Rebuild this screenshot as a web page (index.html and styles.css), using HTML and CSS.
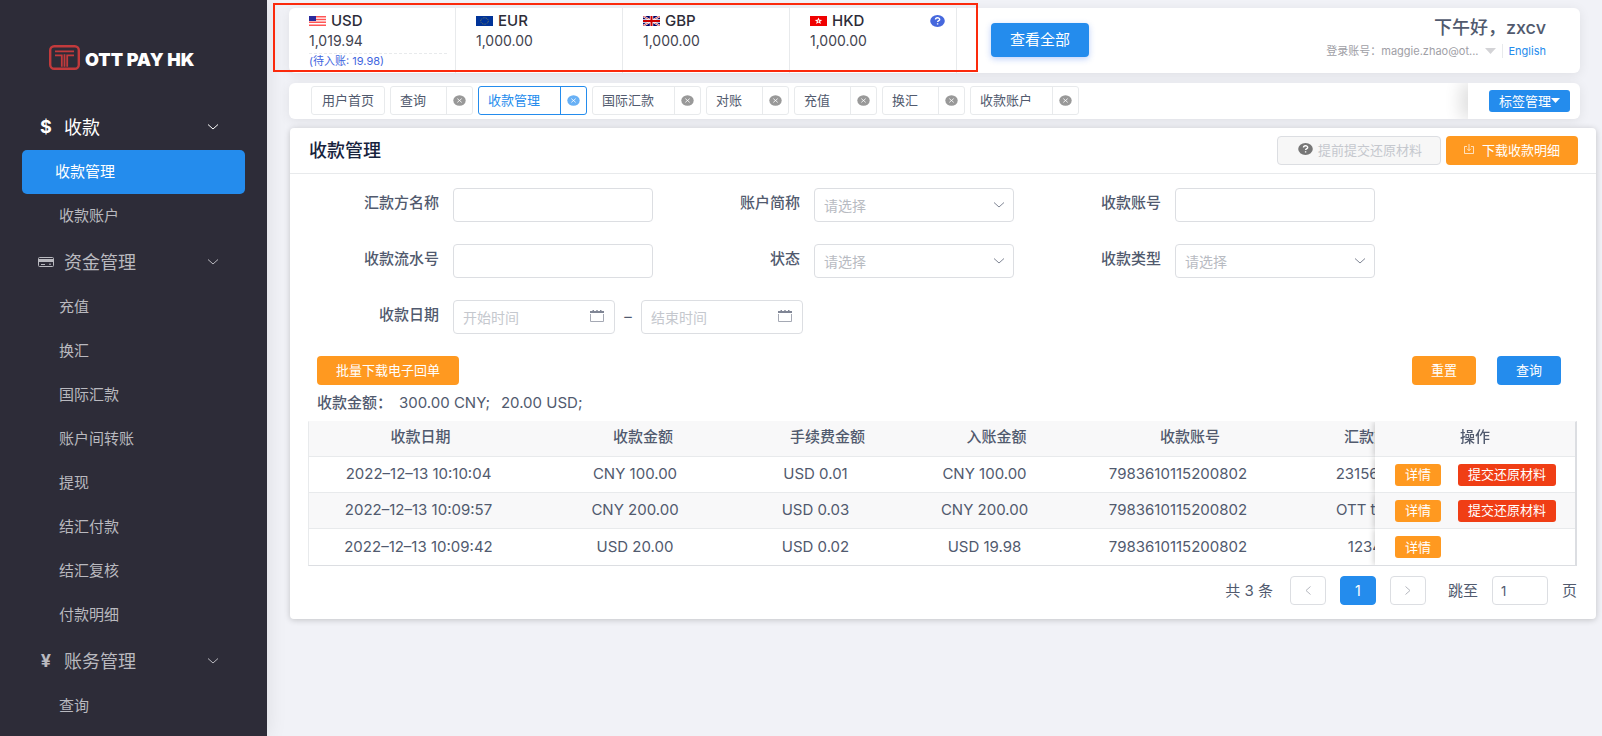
FILE: index.html
```html
<!DOCTYPE html>
<html lang="zh-CN">
<head>
    <meta charset="utf-8">
    <title>收款管理</title>
    <link rel="stylesheet" href="styles.css">
</head>
<body>
    <!-- shared icons -->
    <svg class="sprite" aria-hidden="true">
        <symbol id="chevron" viewBox="0 0 12 8"><path d="M1 1.5l5 4.5 5-4.5" fill="none" stroke="currentColor"/></symbol>
        <symbol id="close" viewBox="0 0 13 11"><ellipse cx="6.5" cy="5.5" rx="6.2" ry="5.3" fill="currentColor"/><path d="M4.3 3.6l4.400 3.800M8.700 3.600L4.300 7.400" stroke="#fff" stroke-width=".8"/></symbol>
        <symbol id="calendar" viewBox="0 0 14 12"><path d="M.5 4v7.500h13V4" fill="none" stroke="#a5a9b4"/><path d="M0 1h2.500V0h1.500v1h2.300V0h1.400v1H10V0h1.500v1H14v2H0z" fill="#808695"/></symbol>
        <symbol id="help" viewBox="0 0 15 12"><ellipse cx="7.500" cy="6" rx="7.300" ry="5.900" fill="currentColor"/><path d="M5.500 4.600c0-2.400 4.200-2.300 4.200-.2 0 1.300-2.100 1.200-2.100 2.700M7.600 8.200v1.300" fill="none" stroke="#fff" stroke-width="1.400"/></symbol>
    </svg>

    <div class="layout">
        <aside class="sidebar">
            <div class="logo">
                <svg width="31" height="25" viewBox="0 0 31 25">
                    <rect x="1.200" y="1.200" width="28.600" height="22.600" rx="4" fill="none" stroke="#c23a3c" stroke-width="2.400"/>
                    <path d="M6 6.300h19M6 10.300h6.800v11.500M25 10.300h-6.800v11.500M15.500 9.300v12.500" fill="none" stroke="#c23a3c" stroke-width="1.800"/>
                </svg>
                <span>OTT PAY HK</span>
            </div>
            <nav>
                <button class="menu-group open">
                    <span class="menu-icon">$</span>
                    <span class="menu-name">收款</span>
                    <svg width="12" height="8"><use href="#chevron"/></svg>
                </button>
                <a class="menu-item active" href="#">收款管理</a>
                <a class="menu-item" href="#">收款账户</a>
                <button class="menu-group">
                    <span class="menu-icon">
                        <svg width="16" height="10" viewBox="0 0 16 10"><rect x=".5" y=".5" width="15" height="9" rx="1" fill="none" stroke="currentColor"/><path d="M1 2h14v3H1z" fill="currentColor"/><path d="M3 7.500h4M11 7.200h2" stroke="currentColor"/></svg>
                    </span>
                    <span class="menu-name">资金管理</span>
                    <svg width="12" height="8"><use href="#chevron"/></svg>
                </button>
                <a class="menu-item" href="#">充值</a>
                <a class="menu-item" href="#">换汇</a>
                <a class="menu-item" href="#">国际汇款</a>
                <a class="menu-item" href="#">账户间转账</a>
                <a class="menu-item" href="#">提现</a>
                <a class="menu-item" href="#">结汇付款</a>
                <a class="menu-item" href="#">结汇复核</a>
                <a class="menu-item" href="#">付款明细</a>
                <button class="menu-group">
                    <span class="menu-icon">¥</span>
                    <span class="menu-name">账务管理</span>
                    <svg width="12" height="8"><use href="#chevron"/></svg>
                </button>
                <a class="menu-item" href="#">查询</a>
            </nav>
        </aside>

        <main class="content">
            <div class="highlight"></div>
            <header class="topbar">
                <div class="currency">
                    <div class="currency-name">
                        <svg width="17" height="10" viewBox="0 0 17 10"><path fill="#fff" d="M0 0h17v10H0z"/><path d="M0 .7h17M0 3.500h17M0 6.300h17M0 9.200h17" stroke="#f55" stroke-width="1.500"/><path fill="#2a2a9c" d="M0 0h7v5H0z"/></svg>
                        USD
                    </div>
                    <div class="amount">1,019.94</div>
                    <div class="pending">(待入账: 19.98)</div>
                </div>
                <div class="currency">
                    <div class="currency-name">
                        <svg width="17" height="10" viewBox="0 0 17 10"><path fill="#039" d="M0 0h17v10H0z"/><ellipse cx="8.500" cy="5" rx="3.800" ry="3.200" fill="none" stroke="#aa9f40" stroke-width=".8" stroke-dasharray=".8 1"/></svg>
                        EUR
                    </div>
                    <div class="amount">1,000.00</div>
                </div>
                <div class="currency">
                    <div class="currency-name">
                        <svg width="17" height="10" viewBox="0 0 17 10"><path fill="#006" d="M0 0h17v10H0z"/><path d="M0 0l17 10M17 0L0 10" stroke="#fff" stroke-width="2"/><path d="M0 0l17 10M17 0L0 10" stroke="#c00" stroke-width=".7"/><path d="M8.500 0v10M0 5h17" stroke="#fff" stroke-width="3.400"/><path d="M8.500 0v10M0 5h17" stroke="#c00" stroke-width="2"/></svg>
                        GBP
                    </div>
                    <div class="amount">1,000.00</div>
                </div>
                <div class="currency">
                    <div class="currency-name">
                        <svg width="17" height="10" viewBox="0 0 17 10"><path fill="#f00000" d="M0 0h17v10H0z"/><path d="M8.500 1.500l1 2.300 2.700.2-2 1.500.7 2.500-2.400-1.400L6.100 8l.7-2.500-2-1.500 2.700-.2z" fill="#fff"/><circle cx="8.500" cy="5" r=".8" fill="#f00000"/></svg>
                        HKD
                        <svg class="currency-help" width="15" height="12"><use href="#help"/></svg>
                    </div>
                    <div class="amount">1,000.00</div>
                </div>
                <button class="view-all">查看全部</button>
                <div class="user">
                    <div class="greeting">下午好，zxcv</div>
                    <div class="account">
                        <span>登录账号：maggie.zhao@ot...</span>
                        <svg width="11" height="6" viewBox="0 0 11 6"><path d="M0 0h11L5.500 6z" fill="#d3d3d6"/></svg>
                        <a href="#">English</a>
                    </div>
                </div>
            </header>

            <div class="tabbar">
                <div class="tabs">
                    <div class="tab"><a href="#">用户首页</a></div>
                    <div class="tab closable"><a href="#">查询</a><button aria-label="关闭"><svg width="13" height="11"><use href="#close"/></svg></button></div>
                    <div class="tab closable current"><a href="#">收款管理</a><button aria-label="关闭"><svg width="13" height="11"><use href="#close"/></svg></button></div>
                    <div class="tab closable"><a href="#">国际汇款</a><button aria-label="关闭"><svg width="13" height="11"><use href="#close"/></svg></button></div>
                    <div class="tab closable"><a href="#">对账</a><button aria-label="关闭"><svg width="13" height="11"><use href="#close"/></svg></button></div>
                    <div class="tab closable"><a href="#">充值</a><button aria-label="关闭"><svg width="13" height="11"><use href="#close"/></svg></button></div>
                    <div class="tab closable"><a href="#">换汇</a><button aria-label="关闭"><svg width="13" height="11"><use href="#close"/></svg></button></div>
                    <div class="tab closable"><a href="#">收款账户</a><button aria-label="关闭"><svg width="13" height="11"><use href="#close"/></svg></button></div>
                </div>
                <div class="tab-manage">
                    <button class="btn-small blue">标签管理<svg width="9" height="5" viewBox="0 0 9 5"><path d="M0 0h9L4.500 5z" fill="#fff"/></svg></button>
                </div>
            </div>

            <section class="card">
                <div class="card-head">
                    <h1>收款管理</h1>
                    <button class="btn-disabled" disabled><svg width="15" height="12"><use href="#help"/></svg>提前提交还原材料</button>
                    <button class="btn orange download">
                        <svg width="10" height="10" viewBox="0 0 10 10"><path d="M3 2.500H.5v7h9v-7H7M5 0v6.500M3 4.700l2 2 2-2" fill="none" stroke="#fff" stroke-width=".7"/></svg>
                        下载收款明细
                    </button>
                </div>

                <form class="filters">
                    <div class="filter-row">
                        <label for="payer">汇款方名称</label>
                        <input id="payer" type="text">
                        <label for="short-name">账户简称</label>
                        <div class="select-box">
                            <select id="short-name"><option>请选择</option></select>
                            <svg width="12" height="8"><use href="#chevron"/></svg>
                        </div>
                        <label for="account-no">收款账号</label>
                        <input id="account-no" type="text">
                    </div>
                    <div class="filter-row">
                        <label for="serial">收款流水号</label>
                        <input id="serial" type="text">
                        <label for="status">状态</label>
                        <div class="select-box">
                            <select id="status"><option>请选择</option></select>
                            <svg width="12" height="8"><use href="#chevron"/></svg>
                        </div>
                        <label for="type">收款类型</label>
                        <div class="select-box">
                            <select id="type"><option>请选择</option></select>
                            <svg width="12" height="8"><use href="#chevron"/></svg>
                        </div>
                    </div>
                    <div class="filter-row">
                        <label for="date-from">收款日期</label>
                        <div class="date-box">
                            <input id="date-from" type="text" placeholder="开始时间">
                            <svg width="14" height="12"><use href="#calendar"/></svg>
                        </div>
                        <span class="dash">–</span>
                        <div class="date-box">
                            <input id="date-to" type="text" placeholder="结束时间" aria-label="结束时间">
                            <svg width="14" height="12"><use href="#calendar"/></svg>
                        </div>
                    </div>
                    <div class="actions">
                        <button type="button" class="btn orange batch">批量下载电子回单</button>
                        <button type="reset" class="btn orange">重置</button>
                        <button type="button" class="btn blue">查询</button>
                    </div>
                </form>

                <p class="summary"><b>收款金额：</b><span>300.00 CNY;</span><span>20.00 USD;</span></p>

                <div class="table-wrap">
                    <table>
                        <colgroup>
                            <col class="col-date">
                            <col class="col-amount">
                            <col class="col-fee">
                            <col class="col-net">
                            <col class="col-account">
                            <col class="col-payer">
                            <col class="col-ops">
                        </colgroup>
                        <thead>
                            <tr>
                                <th class="th-date">收款日期</th>
                                <th class="th-amount">收款金额</th>
                                <th>手续费金额</th>
                                <th>入账金额</th>
                                <th>收款账号</th>
                                <th>汇款方名称</th>
                                <th class="fixed">操作</th>
                            </tr>
                        </thead>
                        <tbody>
                            <tr>
                                <td>2022–12–13 10:10:04</td>
                                <td>CNY 100.00</td>
                                <td>USD 0.01</td>
                                <td>CNY 100.00</td>
                                <td>7983610115200802</td>
                                <td>23156201</td>
                                <td class="fixed"><div class="ops"><button class="btn-small orange">详情</button><button class="btn-small red">提交还原材料</button></div></td>
                            </tr>
                            <tr>
                                <td>2022–12–13 10:09:57</td>
                                <td>CNY 200.00</td>
                                <td>USD 0.03</td>
                                <td>CNY 200.00</td>
                                <td>7983610115200802</td>
                                <td>OTT test1</td>
                                <td class="fixed"><div class="ops"><button class="btn-small orange">详情</button><button class="btn-small red">提交还原材料</button></div></td>
                            </tr>
                            <tr>
                                <td>2022–12–13 10:09:42</td>
                                <td>USD 20.00</td>
                                <td>USD 0.02</td>
                                <td>USD 19.98</td>
                                <td>7983610115200802</td>
                                <td>12345</td>
                                <td class="fixed"><div class="ops"><button class="btn-small orange">详情</button></div></td>
                            </tr>
                        </tbody>
                    </table>
                </div>

                <div class="pager">
                    <span class="total">共 3 条</span>
                    <button aria-label="上一页"><svg width="6" height="9" viewBox="0 0 6 9"><path d="M5.500.5L1 4.500l4.500 4" fill="none" stroke="currentColor"/></svg></button>
                    <button class="current">1</button>
                    <button aria-label="下一页"><svg width="6" height="9" viewBox="0 0 6 9"><path d="M.5.5L5 4.500.5 8.500" fill="none" stroke="currentColor"/></svg></button>
                    <label for="page-no">跳至</label>
                    <input id="page-no" type="text" value="1">
                    <span>页</span>
                </div>
            </section>
        </main>
    </div>
</body>
</html>
```
FILE: styles.css
```css
* {
    box-sizing: border-box;
}
body {
    margin: 0;
    background: #f1f2f7;
    color: #515a6e;
    font-family: Inter, 'Noto Sans CJK SC', sans-serif;
    font-size: 15px;
}
button, input, select {
    font: inherit;
    color: inherit;
    margin: 0;
}
button {
    border: 0;
    padding: 0;
    background: none;
    white-space: nowrap;
    cursor: pointer;
}
a {
    color: inherit;
    text-decoration: none;
}
svg {
    flex: none;
}
.sprite {
    display: none;
}
.layout {
    display: flex;
    height: 100vh;
    overflow: hidden;
}

/* sidebar */
.sidebar {
    flex: none;
    width: 267px;
    background: #2d2c38;
    color: #b9b9bf;
    box-shadow: 2px 0 18px rgba(0, 0, 0, .08);
}
.logo {
    display: flex;
    align-items: center;
    gap: 5px;
    height: 103px;
    padding: 12px 0 0 49px;
    color: #fff;
    font-size: 18px;
    font-weight: 900;
}
.logo span {
    padding-top: 4px;
}
.menu-group {
    display: flex;
    align-items: center;
    width: 100%;
    height: 47px;
    padding: 0 48px 0 38px;
    font-size: 18px;
}
.menu-group.open {
    color: #fff;
}
.menu-icon {
    width: 16px;
    margin-right: 10px;
    font-weight: 700;
    font-size: 18px;
    text-align: center;
}
.menu-icon svg {
    display: block;
}
.menu-name {
    flex: 1;
    padding-bottom: 2px;
    text-align: left;
}
.menu-item {
    display: flex;
    align-items: center;
    height: 44px;
    margin: 0 22px;
    padding: 0 0 3px 37px;
}
.menu-item.active {
    padding-left: 33px;
    border-radius: 5px;
    background: #248ced;
    color: #fff;
}

/* top */
.content {
    flex: 1;
    min-width: 0;
    position: relative;
    padding: 8px 6px 0 22px;
}
.highlight {
    position: absolute;
    z-index: 3;
    top: 3px;
    left: 6px;
    width: 705px;
    height: 69px;
    border: 2px solid #fb2a0c;
    pointer-events: none;
}
.topbar {
    display: flex;
    height: 65px;
    margin-right: 16px;
    border-radius: 6px;
    background: #fff;
    box-shadow: 0 2px 12px rgba(0, 0, 0, .08);
}
.currency {
    width: 167px;
    padding: 3px 8px 0 20px;
    border-right: 1px solid #e8eaec;
    color: #43434f;
    line-height: 20px;
}
.currency-name {
    display: flex;
    align-items: center;
    gap: 5px;
    color: #2d2c38;
    font-weight: 500;
}
.currency-help {
    margin-left: auto;
    margin-right: 3px;
    color: #4668dd;
}
.amount {
    font-size: 14px;
}
.pending {
    border-top: 1px dashed #e8eaec;
    margin-top: 2px;
    color: #3f66e0;
    font-size: 11px;
    line-height: 14px;
}
.view-all {
    width: 98px;
    height: 34px;
    margin: 15px 0 0 34px;
    padding-bottom: 3px;
    border-radius: 4px;
    background: #248ced;
    box-shadow: 0 2px 6px rgba(36, 100, 237, .3);
    color: #fff;
}
.user {
    margin-left: auto;
    padding: 7px 34px 0 0;
    text-align: right;
}
.greeting {
    font-size: 18px;
    font-weight: 500;
    line-height: 26px;
}
.account {
    display: flex;
    align-items: center;
    justify-content: flex-end;
    gap: 6px;
    padding-top: 3px;
    color: #a0a0a6;
    font-size: 11px;
    line-height: 14px;
}
.account a {
    padding-left: 6px;
    border-left: 1px solid #e8eaec;
    color: #248ced;
}

/* tabs */
.tabbar {
    display: flex;
    justify-content: space-between;
    height: 36px;
    margin: 10px 16px 0 0;
    border-radius: 6px;
    background: #fff;
    box-shadow: 0 2px 12px rgba(0, 0, 0, .08);
    overflow: hidden;
}
.tabs {
    display: flex;
    gap: 5px;
    padding: 3px 0 4px 22px;
    font-size: 13px;
}
.tab {
    display: flex;
    border: 1px solid #e8eaec;
    border-radius: 3px;
}
.tab a {
    display: flex;
    align-items: center;
    padding: 0 10px 2px;
}
.tab.closable a {
    padding-right: 20px;
    padding-left: 9px;
}
.tab button {
    display: flex;
    align-items: center;
    justify-content: center;
    width: 26px;
    border-left: 1px solid #e8eaec;
    color: #999;
}
.tab.current, .tab.current button {
    border-color: #248ced;
}
.tab.current {
    color: #248ced;
}
.tab.current button {
    color: #68b0f5;
}
.tab-manage {
    display: flex;
    align-items: center;
    padding: 0 10px 0 21px;
    box-shadow: -8px 0 16px rgba(0, 0, 0, .12);
}

/* buttons */
.btn {
    height: 29px;
    padding: 0 19px 3px;
    border-radius: 4px;
    color: #fff;
    font-size: 13px;
}
.btn-small {
    height: 22px;
    padding: 0 10px 2px;
    border-radius: 3px;
    color: #fff;
    font-size: 13px;
}
.tab-manage .btn-small {
    display: flex;
    align-items: center;
}
.orange {
    background: #ff9920;
}
.blue {
    background: #248ced;
}
.red {
    background: #f03e15;
}
.btn-disabled {
    display: flex;
    align-items: center;
    gap: 5px;
    height: 29px;
    margin-left: auto;
    padding: 0 18px 2px 20px;
    border: 1px solid #dcdee2;
    border-radius: 4px;
    background: #f7f7f7;
    color: #c5c8ce;
    font-size: 13px;
}
.btn-disabled svg {
    color: #777;
}
.download {
    display: flex;
    align-items: center;
    gap: 8px;
    padding: 0 18px 2px;
}

/* card */
.card {
    margin: 9px 0 0 1px;
    padding-bottom: 14px;
    border-radius: 4px;
    background: #fff;
    box-shadow: 0 1px 6px rgba(0, 0, 0, .2);
}
.card-head {
    display: flex;
    align-items: center;
    gap: 5px;
    height: 46px;
    padding: 0 18px 1px 19px;
    border-bottom: 1px solid #e8eaec;
}
.card-head h1 {
    margin: 0;
    padding-bottom: 2px;
    color: #17233d;
    font-size: 18px;
    font-weight: 500;
}
.filters {
    padding: 14px 35px 0 19px;
}
.filter-row {
    display: flex;
    height: 34px;
    margin-bottom: 22px;
}
.filter-row label {
    width: 161px;
    padding-right: 14px;
    font-weight: 500;
    line-height: 30px;
    text-align: right;
}
.filter-row label:first-child {
    width: 144px;
}
.filter-row input, .filter-row select {
    width: 200px;
    height: 34px;
    padding: 0 9px;
    border: 1px solid #dcdee2;
    border-radius: 4px;
    background: #fff;
    color: #b8bbc2;
    font-size: 14px;
    appearance: none;
}
.filter-row input::placeholder {
    color: #c5c8ce;
}
.select-box, .date-box {
    display: grid;
    align-items: center;
}
.select-box > *, .date-box > * {
    grid-area: 1 / 1;
}
.select-box svg, .date-box svg {
    justify-self: end;
    margin-right: 9px;
    color: #808695;
    pointer-events: none;
}
.date-box svg {
    margin: 0 11px 3px 0;
}
.filter-row .date-box input {
    width: 162px;
}
.dash {
    width: 26px;
    line-height: 34px;
    text-align: center;
}
.actions {
    display: flex;
    gap: 21px;
    padding-left: 8px;
}
.batch {
    margin-right: auto;
}
.summary {
    display: flex;
    gap: 11px;
    margin: 0;
    padding: 6px 27px;
    line-height: 24px;
}
.summary b {
    font-weight: 500;
    margin-right: -4px;
}

/* table */
.table-wrap {
    margin: 0 19px 0 18px;
    border: 1px solid #e8eaec;
    border-top-color: #f8f8f9;
    border-right: 2px solid #dcdee2;
    border-bottom-color: #dcdee2;
    overflow-x: auto;
    scrollbar-width: none;
}
table {
    width: 100%;
    min-width: 1354px;
    border-collapse: separate;
    border-spacing: 0;
    table-layout: fixed;
}
.col-date {
    width: 219px;
}
.col-amount {
    width: 214px;
}
.col-fee {
    width: 147px;
}
.col-net {
    width: 191px;
}
.col-account {
    width: 196px;
}
.col-payer {
    width: 187px;
}
.col-ops {
    width: 200px;
}
th, td {
    height: 36px;
    padding: 0 0 2px;
    border-bottom: 1px solid #e8eaec;
    background: #fff;
    text-align: center;
    white-space: nowrap;
}
tr:last-child td {
    border-bottom: 0;
}
th {
    height: 35px;
    padding: 0 0 4px 24px;
    border-bottom: 1px solid #e8eaec;
    background: #f8f8f9;
    font-weight: 500;
    line-height: 20px;
}
.th-date {
    padding-left: 4px;
}
.th-amount {
    padding-left: 16px;
}
tbody tr:nth-child(2) td {
    background: #f8f8f9;
}
.fixed {
    position: sticky;
    right: 0;
    padding-left: 0;
    box-shadow: -1px 0 6px rgba(0, 0, 0, .2);
    clip-path: inset(0 0 0 -10px);
}
td.fixed {
    padding-bottom: 0;
}
.ops {
    display: flex;
    gap: 17px;
    padding-left: 20px;
}

/* pager */
.pager {
    display: flex;
    align-items: center;
    justify-content: flex-end;
    gap: 14px;
    padding: 10px 19px 0;
}
.pager span, .pager label {
    padding-bottom: 3px;
}
.pager .total {
    padding-right: 3px;
}
.pager button {
    display: flex;
    align-items: center;
    justify-content: center;
    width: 36px;
    height: 29px;
    border: 1px solid #dcdee2;
    border-radius: 4px;
    color: #b4b7be;
}
.pager .current {
    border-color: #248ced;
    background: #248ced;
    color: #fff;
    font-size: 14px;
}
.pager label {
    padding-left: 8px;
}
.pager input {
    width: 56px;
    height: 29px;
    padding: 0 8px;
    border: 1px solid #dcdee2;
    border-radius: 4px;
    font-size: 13px;
}
```
